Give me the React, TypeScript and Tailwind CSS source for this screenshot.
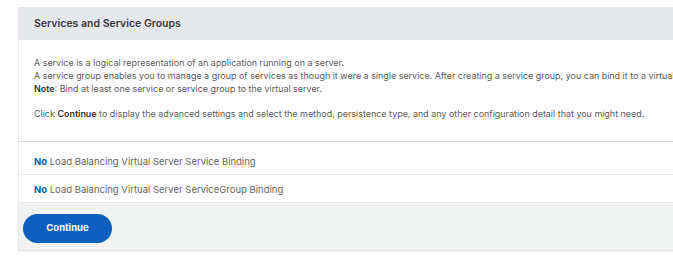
import React from 'react';

const rows = [
  'Load Balancing Virtual Server Service Binding',
  'Load Balancing Virtual Server ServiceGroup Binding',
];

export default function App() {
  return (
    <div className="w-[673px] h-[273px] overflow-hidden bg-white pl-[18px] pt-[7px] font-['Inter',sans-serif]">
      <div className="w-[720px] border border-[#e6e7e8] shadow-[0_1px_2px_rgba(0,0,0,0.06)]">
        <div className="h-[32px] bg-[#e6e8eb] px-[15px] flex items-center">
          <span className="text-[10.5px] font-semibold text-[#3a3a3a]">Services and Service Groups</span>
        </div>

        <div className="px-[15px] pt-[16px] pb-[21px] text-[8.95px] leading-[13px] text-[#5b5b5b] whitespace-nowrap border-b border-[#d4d5d6]">
          <div>A service is a logical representation of an application running on a server.</div>
          <div>
            A service group enables you to manage a group of services as though it were a single service. After creating a service group, you can bind it to a virtual server.
          </div>
          <div>
            <span className="font-semibold text-[#333]">Note</span>: Bind at least one service or service group to the virtual server.
          </div>
          <div className="h-[12px]" />
          <div>
            Click <span className="font-semibold text-[#333]">Continue</span> to display the advanced settings and select the method, persistence type, and any other configuration detail that you might need.
          </div>
        </div>

        <div className="h-[33px] px-[15px] pt-[14px] text-[9.5px] leading-[12px] text-[#666] border-b border-[#ececec]">
          <span className="font-bold text-[#0b5cad]">No</span> {rows[0]}
        </div>
        <div className="h-[28px] px-[15px] pt-[9px] text-[9.5px] leading-[12px] text-[#666] border-b border-[#e6e7e8]">
          <span className="font-bold text-[#0b5cad]">No</span> {rows[1]}
        </div>

        <div className="h-[47px] bg-[#f1f2f2] pl-[4px] pt-[10px]">
          <button className="w-[89px] h-[29px] rounded-full bg-[#0c5fbd] text-white text-[9.5px] font-bold">
            Continue
          </button>
        </div>
      </div>
    </div>
  );
}
